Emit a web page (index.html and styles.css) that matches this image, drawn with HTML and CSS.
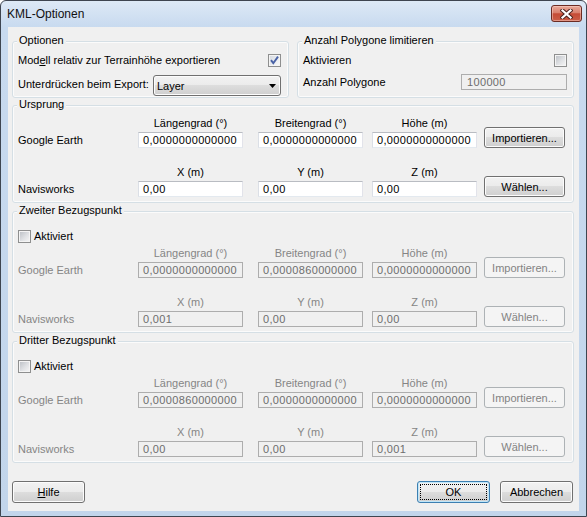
FILE: index.html
```html
<!DOCTYPE html>
<html lang="de">
<head>
<meta charset="utf-8">
<title>KML-Optionen</title>
<link rel="stylesheet" href="styles.css">
</head>
<body>
<div class="window">
  <div class="titlebar">
    <span class="title">KML-Optionen</span>
    <span class="close">
      <svg width="13" height="10" viewBox="0 0 13 10">
        <path d="M2.5 1.5 L10.5 8.5 M10.5 1.5 L2.5 8.5" stroke="#4d2420" stroke-width="4.2" stroke-linecap="square" fill="none"/>
        <path d="M2.5 1.5 L10.5 8.5 M10.5 1.5 L2.5 8.5" stroke="#ffffff" stroke-width="2.2" stroke-linecap="square" fill="none"/>
      </svg>
    </span>
  </div>
  <div class="client">
    <div class="toprow">
      <div class="group g-opt">
        <div class="gtitle">Optionen</div>
        <div class="row r1">
          <span>Mod<u>e</u>ll relativ zur Terrainhöhe exportieren</span>
          <span class="cb checked">
            <svg width="11" height="11" viewBox="0 0 11 11"><path d="M2 5.2 L4.3 8.2 L9 1.6" stroke="#4a63a6" stroke-width="1.9" fill="none"/></svg>
          </span>
        </div>
        <div class="row r2">
          <span class="lab-mid">Unterdrücken beim Export:</span>
          <div class="combo">
            <span>Layer</span>
            <svg class="arrow" width="7" height="4" viewBox="0 0 7 4"><path d="M0 0 H7 L3.5 4 Z" fill="#000"/></svg>
          </div>
        </div>
      </div>
      <div class="group g-lim">
        <div class="gtitle">Anzahl Polygone limitieren</div>
        <div class="row r1">
          <span>Aktivieren</span>
          <span class="cb"></span>
        </div>
        <div class="row r2b">
          <span>Anzahl Polygone</span>
          <div class="inp dis small">100000</div>
        </div>
      </div>
    </div>

    <div class="group g-urs">
      <div class="gtitle">Ursprung</div>
      <div class="block b1">
        <span class="hdr c1">Längengrad (°)</span>
        <span class="hdr c2">Breitengrad (°)</span>
        <span class="hdr c3">Höhe (m)</span>
        <span class="lab">Google Earth</span>
        <div class="inp c1">0,0000000000000</div>
        <div class="inp c2">0,0000000000000</div>
        <div class="inp c3">0,0000000000000</div>
        <button class="btn side">Importieren...</button>
      </div>
      <div class="block b2">
        <span class="hdr c1">X (m)</span>
        <span class="hdr c2">Y (m)</span>
        <span class="hdr c3">Z (m)</span>
        <span class="lab">Navisworks</span>
        <div class="inp c1">0,00</div>
        <div class="inp c2">0,00</div>
        <div class="inp c3">0,00</div>
        <button class="btn side">Wählen...</button>
      </div>
    </div>

    <div class="group g-ref">
      <div class="gtitle">Zweiter Bezugspunkt</div>
      <div class="cbrow"><span class="cb"></span><span>Aktiviert</span></div>
      <div class="block b1s disabled">
        <span class="hdr c1">Längengrad (°)</span>
        <span class="hdr c2">Breitengrad (°)</span>
        <span class="hdr c3">Höhe (m)</span>
        <span class="lab">Google Earth</span>
        <div class="inp dis c1">0,0000000000000</div>
        <div class="inp dis c2">0,0000860000000</div>
        <div class="inp dis c3">0,0000000000000</div>
        <button class="btn side off">Importieren...</button>
      </div>
      <div class="block b2 disabled">
        <span class="hdr c1">X (m)</span>
        <span class="hdr c2">Y (m)</span>
        <span class="hdr c3">Z (m)</span>
        <span class="lab">Navisworks</span>
        <div class="inp dis c1">0,001</div>
        <div class="inp dis c2">0,00</div>
        <div class="inp dis c3">0,00</div>
        <button class="btn side off">Wählen...</button>
      </div>
    </div>

    <div class="group g-ref">
      <div class="gtitle">Dritter Bezugspunkt</div>
      <div class="cbrow"><span class="cb"></span><span>Aktiviert</span></div>
      <div class="block b1s disabled">
        <span class="hdr c1">Längengrad (°)</span>
        <span class="hdr c2">Breitengrad (°)</span>
        <span class="hdr c3">Höhe (m)</span>
        <span class="lab">Google Earth</span>
        <div class="inp dis c1">0,0000860000000</div>
        <div class="inp dis c2">0,0000000000000</div>
        <div class="inp dis c3">0,0000000000000</div>
        <button class="btn side off">Importieren...</button>
      </div>
      <div class="block b2 disabled">
        <span class="hdr c1">X (m)</span>
        <span class="hdr c2">Y (m)</span>
        <span class="hdr c3">Z (m)</span>
        <span class="lab">Navisworks</span>
        <div class="inp dis c1">0,00</div>
        <div class="inp dis c2">0,00</div>
        <div class="inp dis c3">0,001</div>
        <button class="btn side off">Wählen...</button>
      </div>
    </div>

    <div class="actions">
      <button class="btn act help"><u>H</u>ilfe</button>
      <button class="btn act ok"><span class="focus">OK</span></button>
      <button class="btn act">Abbrechen</button>
    </div>
  </div>
</div>
</body>
</html>
```

FILE: styles.css
```css
html, body {
  margin: 0;
  padding: 0;
  background: #ffffff;
}

body {
  font-family: "Liberation Sans", Arial, sans-serif;
  font-size: 11px;
  color: #000;
}

.window {
  width: 587px;
  height: 517px;
  box-sizing: border-box;
  border: 1px solid #3e4550;
  border-radius: 6px 6px 0 0;
  background: linear-gradient(#dde9f6 0, #c8daef 26px, #c2d5eb 100%);
  display: flex;
  flex-direction: column;
  overflow: hidden;
}

.titlebar {
  height: 26px;
  flex: none;
  display: flex;
  justify-content: space-between;
  align-items: flex-start;
}

.title {
  margin: 6px 0 0 6px;
  font-size: 12px;
  line-height: 15px;
  color: #111;
}

.close {
  margin: 4px 4px 0 0;
  width: 31px;
  height: 17px;
  box-sizing: border-box;
  border: 1px solid #6b2b23;
  border-radius: 3px;
  background: linear-gradient(#e8a99a 0, #d9806d 45%, #c54b35 52%, #cb5e48 100%);
  box-shadow: inset 0 0 0 1px rgba(255, 220, 210, 0.45);
  display: flex;
  align-items: center;
  justify-content: center;
}

.client {
  flex: 1;
  margin: 0 7px 5px;
  background: #f0f0f0;
  padding: 14px 5px 0 4px;
  display: flex;
  flex-direction: column;
}

/* group boxes */
.group {
  border: 1px solid #d5dfe5;
  border-radius: 3px;
  box-shadow: inset 0 0 0 1px #fbfbfb;
  padding: 0 6px 5px 5px;
}

.g-urs { margin-top: 7px; }
.g-ref { margin-top: 8px; }

.gtitle {
  margin: -8px 0 0 -1px;
  padding: 0 2px;
  background: #f0f0f0;
  line-height: 13px;
  width: fit-content;
}

.toprow {
  display: flex;
  gap: 8px;
}

.g-opt, .g-lim {
  width: 277px;
  box-sizing: border-box;
  padding-bottom: 1px;
}

.g-opt { padding-right: 7px; }
.g-lim { padding-right: 6px; }

.row {
  display: flex;
  justify-content: space-between;
  align-items: center;
}

.r1 { margin-top: 5px; height: 16px; }
.r2 { margin-top: 7px; height: 21px; }
.r2b { margin-top: 6px; height: 16px; }

.lab-mid { margin-top: -3px; }

/* checkbox */
.cb {
  width: 13px;
  height: 13px;
  box-sizing: border-box;
  border: 1px solid #8e8f8f;
  background: linear-gradient(135deg, #b9bdc3 0, #dfe1e4 55%, #f7f7f7 100%);
  box-shadow: inset 0 0 0 1px #f4f4f4;
  flex: none;
  display: flex;
  align-items: center;
  justify-content: center;
}

.cb.checked {
  background: linear-gradient(135deg, #d3d8df 0, #eceef1 60%, #f9f9f9 100%);
}

.cbrow {
  display: flex;
  align-items: center;
  gap: 3px;
  margin-top: 13px;
  height: 13px;
  line-height: 13px;
}

/* combo box */
.combo {
  width: 128px;
  height: 21px;
  box-sizing: border-box;
  border: 1px solid #707070;
  border-radius: 3px;
  background: linear-gradient(#f2f2f2 0, #ebebeb 50%, #dddddd 50%, #cfcfcf 100%);
  box-shadow: inset 0 0 0 1px #fcfcfc;
  display: flex;
  align-items: center;
  justify-content: space-between;
  padding: 1px 4px 0 3px;
}

.arrow { display: block; }

/* coordinate grids */
.block {
  display: grid;
  grid-template-columns: 120px 120px 114px 112px 81px;
  grid-template-rows: 14px 16px;
  row-gap: 2px;
}

.b1 { margin-top: 5px; }
.b1s { margin-top: 3px; }
.b2 { margin-top: 17px; }

.lab {
  grid-row: 2;
  grid-column: 1;
  line-height: 16px;
}

.hdr {
  grid-row: 1;
  width: 105px;
  text-align: center;
  line-height: 14px;
}

.c1 { grid-column: 2; }
.c2 { grid-column: 3; }
.c3 { grid-column: 4; }

.inp {
  width: 105px;
  height: 16px;
  box-sizing: border-box;
  border: 1px solid;
  border-color: #b9bcc2 #e2e3ea #e3e9ef #dbdfe6;
  background: #fff;
  line-height: 14px;
  padding-left: 4px;
  letter-spacing: 0.35px;
  white-space: nowrap;
  overflow: hidden;
}

.block .inp { grid-row: 2; }

.inp.dis {
  background: #f0f0f0;
  border-color: #adadad;
  color: #6d6d6d;
}

.inp.small {
  width: 106px;
  padding-left: 5px;
}

.disabled .hdr, .disabled .lab {
  color: #858585;
}

/* buttons */
.btn {
  box-sizing: border-box;
  border: 1px solid #707070;
  border-radius: 3px;
  background: linear-gradient(#f2f2f2 0, #ebebeb 50%, #dddddd 50%, #cfcfcf 100%);
  box-shadow: inset 0 0 0 1px #fcfcfc;
  font: inherit;
  color: #000;
  display: flex;
  align-items: center;
  justify-content: center;
  padding: 0;
  margin: 0;
}

.side {
  grid-column: 5;
  grid-row: 1 / span 2;
  align-self: end;
  width: 81px;
  height: 21px;
}

.btn.off {
  border-color: #adb2b5;
  background: #f4f4f4;
  box-shadow: none;
  color: #838383;
}

.actions {
  display: flex;
  gap: 10px;
  margin-top: 18px;
  padding-right: 1px;
}

.act {
  width: 73px;
  height: 22px;
}

.help { margin-right: auto; }

.ok {
  border-color: #3c7fb1;
  box-shadow: inset 0 0 0 1px #bfe6f9;
  align-items: stretch;
}

.focus {
  flex: 1;
  margin: 2px;
  border: 1px dotted #000;
  display: flex;
  align-items: center;
  justify-content: center;
}
```
